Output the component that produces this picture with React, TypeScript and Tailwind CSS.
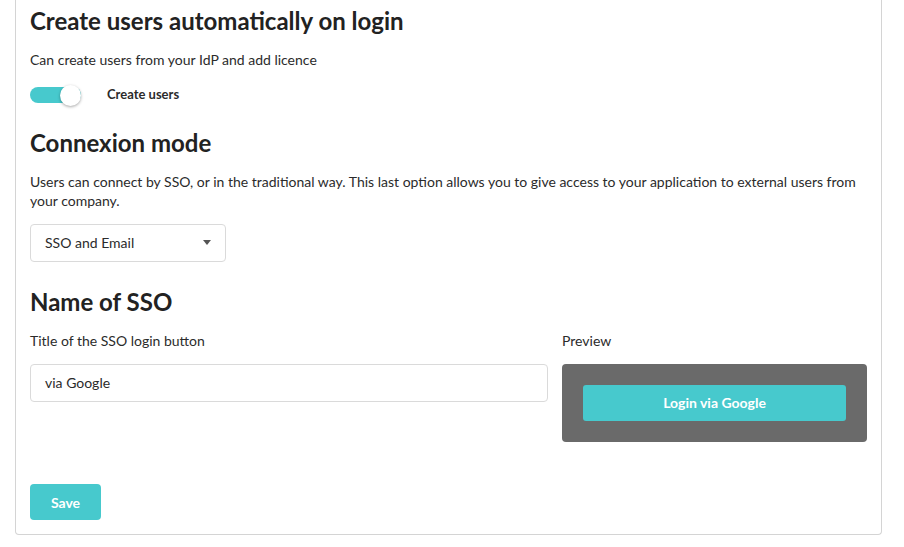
import React from "react";

export default function App() {
  return (
    <div className="w-[904px] h-[547px] bg-white overflow-hidden text-[#2b2b2b]" style={{ fontFamily: "Lato, 'Open Sans', sans-serif" }}>
      <div className="mx-[15px] w-[867px] border-x border-b border-[#d4d4d4] rounded-b-[4px] px-[14px] pt-[6px] pb-[14px]">
        <h1 className="text-[24px] leading-[30px] font-bold text-[#222]">Create users automatically on login</h1>
        <p className="mt-[14px] text-[14px] leading-[20px]">Can create users from your IdP and add licence</p>
        <div className="mt-[14px] flex items-center h-[22px]">
          <div className="w-[51px] h-[16px] rounded-full bg-[#47c9cd] flex items-center justify-end">
            <div className="w-[21px] h-[21px] rounded-full bg-white shadow-[0_1px_3px_rgba(0,0,0,0.35)]" />
          </div>
          <span className="ml-[26px] text-[13px] font-bold">Create users</span>
        </div>
        <h2 className="mt-[22px] text-[24px] leading-[30px] font-bold text-[#222]">Connexion mode</h2>
        <p className="mt-[14px] text-[14px] leading-[19px]">
          Users can connect by SSO, or in the traditional way. This last option allows you to give access to your application to external users from your company.
        </p>
        <div className="mt-[14px] w-[196px] h-[38px] border border-[#dadada] rounded-[4px] flex items-center justify-between pl-[14px] pr-[14px] pb-[1px]">
          <span className="text-[14px]">SSO and Email</span>
          <svg width="8" height="5" viewBox="0 0 8 5"><path d="M0 0h8L4 5z" fill="#555" /></svg>
        </div>
        <h2 className="mt-[25px] text-[24px] leading-[30px] font-bold text-[#222]">Name of SSO</h2>
        <div className="mt-[14px] grid grid-cols-[518px_1fr] gap-x-[14px]">
          <label className="text-[14px] leading-[20px]">Title of the SSO login button</label>
          <div className="text-[14px] leading-[20px]">Preview</div>
          <div className="mt-[13px] h-[38px] border border-[#dadada] rounded-[4px] flex items-center pl-[14px] pb-[1px] text-[14px] self-start">via Google</div>
          <div className="mt-[13px] h-[78px] bg-[#6a6a6a] rounded-[4px] px-[21px] flex items-center">
            <div className="w-full h-[36px] bg-[#47c9cd] rounded-[3px] flex items-center justify-center pb-[1px] text-white font-bold text-[14px]">Login via Google</div>
          </div>
        </div>
        <button className="mt-[42px] w-[71px] h-[36px] bg-[#47c9cd] rounded-[4px] text-white font-bold text-[14px] flex items-center justify-center">Save</button>
      </div>
    </div>
  );
}
